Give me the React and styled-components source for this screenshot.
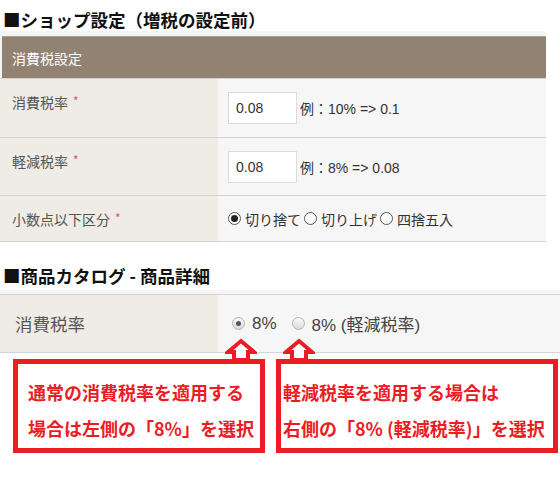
import styled, { createGlobalStyle } from "styled-components";

const GlobalStyle = createGlobalStyle`
  body {
    margin: 0;
    background: #fff;
    font-family: "Liberation Sans", "Noto Sans CJK JP", sans-serif;
  }
`;

const Page = styled.div`
  position: relative;
  width: 560px;
  height: 482px;
  overflow: hidden;
`;

const SectionTitle = styled.h2`
  margin: 0;
  padding: ${(p) => p.$top}px 0 0 3px;
  font-family: "Noto Sans CJK JP", sans-serif;
  font-size: 17.5px;
  font-weight: 700;
  line-height: 23px;
  color: #111;
`;

const Table = styled.div`
  width: 546px;
  background: #f5f5f5;
  padding-top: 5px;
  border-bottom: 1px solid #d4d4d4;
`;

const TableHead = styled.div`
  margin-left: 2px;
  height: 41px;
  display: flex;
  align-items: center;
  padding-left: 10px;
  border-top: 1px solid #a99b8d;
  background: #928272;
  color: #fff;
  font-family: "Noto Sans CJK JP", sans-serif;
  font-size: 14px;
`;

const Row = styled.div`
  display: grid;
  grid-template-columns: 218px 1fr;
  box-sizing: border-box;
  height: ${(p) => p.$h}px;
  border-top: 1px solid #d4d4d4;
`;

const Label = styled.div`
  background: #efebe5;
  padding: ${(p) => (p.$center ? "0 0 0 15px" : "12px 0 0 12px")};
  display: ${(p) => (p.$center ? "flex" : "block")};
  align-items: center;
  font-family: "Noto Sans CJK JP", sans-serif;
  font-size: ${(p) => (p.$big ? "17.5px" : "14px")};
  line-height: 20px;
  color: #555;
`;

const Required = styled.span`
  margin-left: 5px;
  color: #e2546b;
  font-size: 12px;
  vertical-align: 2px;
`;

const Value = styled.div`
  display: flex;
  align-items: center;
  padding-left: ${(p) => p.$pad || 10}px;
  background: #f6f6f6;
  font-size: 14px;
  color: #333;
`;

const TextInput = styled.div`
  box-sizing: border-box;
  width: 69px;
  height: 32px;
  display: flex;
  align-items: center;
  padding-left: 7px;
  margin-right: 3px;
  background: #fff;
  border: 1px solid #dcdcdc;
  font-size: 14px;
  color: #333;
`;

const Hint = styled.span`
  font-size: 14px;
  color: #333;
`;

const ClassicRadio = styled.span`
  box-sizing: border-box;
  width: 13px;
  height: 13px;
  margin: 0 4px 0 ${(p) => (p.$first ? 0 : 3)}px;
  border-radius: 50%;
  border: 1px solid #555;
  background: #fff;
  display: inline-flex;
  align-items: center;
  justify-content: center;
  &::after {
    content: "";
    width: 7px;
    height: 7px;
    border-radius: 50%;
    background: ${(p) => (p.$checked ? "#222" : "transparent")};
  }
`;

const SoftRadio = styled.span`
  box-sizing: border-box;
  width: 13px;
  height: 13px;
  margin-right: 7px;
  border-radius: 50%;
  border: 1px solid #b4b4b4;
  background: linear-gradient(#fbfbfb, #d9d9d9);
  display: inline-flex;
  align-items: center;
  justify-content: center;
  &::after {
    content: "";
    width: 5px;
    height: 5px;
    border-radius: 50%;
    background: ${(p) => (p.$checked ? "#555" : "transparent")};
  }
`;

const Choice = styled.span`
  font-family: "Liberation Sans", "Noto Sans CJK JP", sans-serif;
  font-size: ${(p) => (p.$big ? "17px" : "14px")};
  color: ${(p) => (p.$big ? "#444" : "#333")};
  margin-right: ${(p) => p.$gap || 0}px;
`;

const Callout = styled.div`
  position: relative;
`;

const ProductTable = styled.div`
  margin-top: 3px;
  background: #f5f5f5;
  padding-top: 4px;
  border-bottom: 1px solid #d4d4d4;
`;

const Boxes = styled.div`
  display: flex;
  gap: 11px;
  margin: 6px 0 0 13px;
`;

const NoteBox = styled.div`
  box-sizing: border-box;
  width: ${(p) => p.$w}px;
  height: 94px;
  padding: 10px 0 0 ${(p) => p.$pad}px;
  border: 5px solid #ed1c24;
  background: #fff;
  font-family: "Noto Sans CJK JP", sans-serif;
  font-size: 18px;
  font-weight: 700;
  line-height: 36px;
  color: #ec1c24;
  white-space: nowrap;
`;

const Arrow = styled.svg`
  position: absolute;
  top: 48px;
  left: ${(p) => p.$x}px;
`;

const UpArrow = ({ x }) => (
  <Arrow $x={x} width="32" height="24" viewBox="0 0 32 24">
    <path
      d="M16 3 L29 14 L23 14 L23 22 L9 22 L9 14 L3 14 Z"
      fill="#fff"
      stroke="#ed1c24"
      strokeWidth="4"
    />
  </Arrow>
);

export default function App() {
  return (
    <Page>
      <GlobalStyle />
      <SectionTitle $top={8}>■ショップ設定（増税の設定前）</SectionTitle>
      <Table>
        <TableHead>消費税設定</TableHead>
        <Row $h={59}>
          <Label>
            消費税率<Required>*</Required>
          </Label>
          <Value>
            <TextInput>0.08</TextInput>
            <Hint>例：10% =&gt; 0.1</Hint>
          </Value>
        </Row>
        <Row $h={58}>
          <Label>
            軽減税率<Required>*</Required>
          </Label>
          <Value>
            <TextInput>0.08</TextInput>
            <Hint>例：8% =&gt; 0.08</Hint>
          </Value>
        </Row>
        <Row $h={46}>
          <Label>
            小数点以下区分<Required>*</Required>
          </Label>
          <Value>
            <ClassicRadio $first $checked />
            <Choice>切り捨て</Choice>
            <ClassicRadio />
            <Choice>切り上げ</Choice>
            <ClassicRadio />
            <Choice>四捨五入</Choice>
          </Value>
        </Row>
      </Table>

      <SectionTitle $top={22}>■商品カタログ - 商品詳細</SectionTitle>
      <Callout>
        <ProductTable>
          <Row $h={58}>
            <Label $center $big>消費税率</Label>
            <Value $pad={14}>
              <SoftRadio $checked />
              <Choice $big $gap={15}>8%</Choice>
              <SoftRadio />
              <Choice $big>8% (軽減税率)</Choice>
            </Value>
          </Row>
        </ProductTable>
        <Boxes>
          <NoteBox $w={252} $pad={10}>
            通常の消費税率を適用する
            <br />
            場合は左側の「8%」を選択
          </NoteBox>
          <NoteBox $w={282} $pad={2}>
            軽減税率を適用する場合は
            <br />
            右側の「8% (軽減税率)」を選択
          </NoteBox>
        </Boxes>
        <UpArrow x={225} />
        <UpArrow x={283} />
      </Callout>
    </Page>
  );
}
